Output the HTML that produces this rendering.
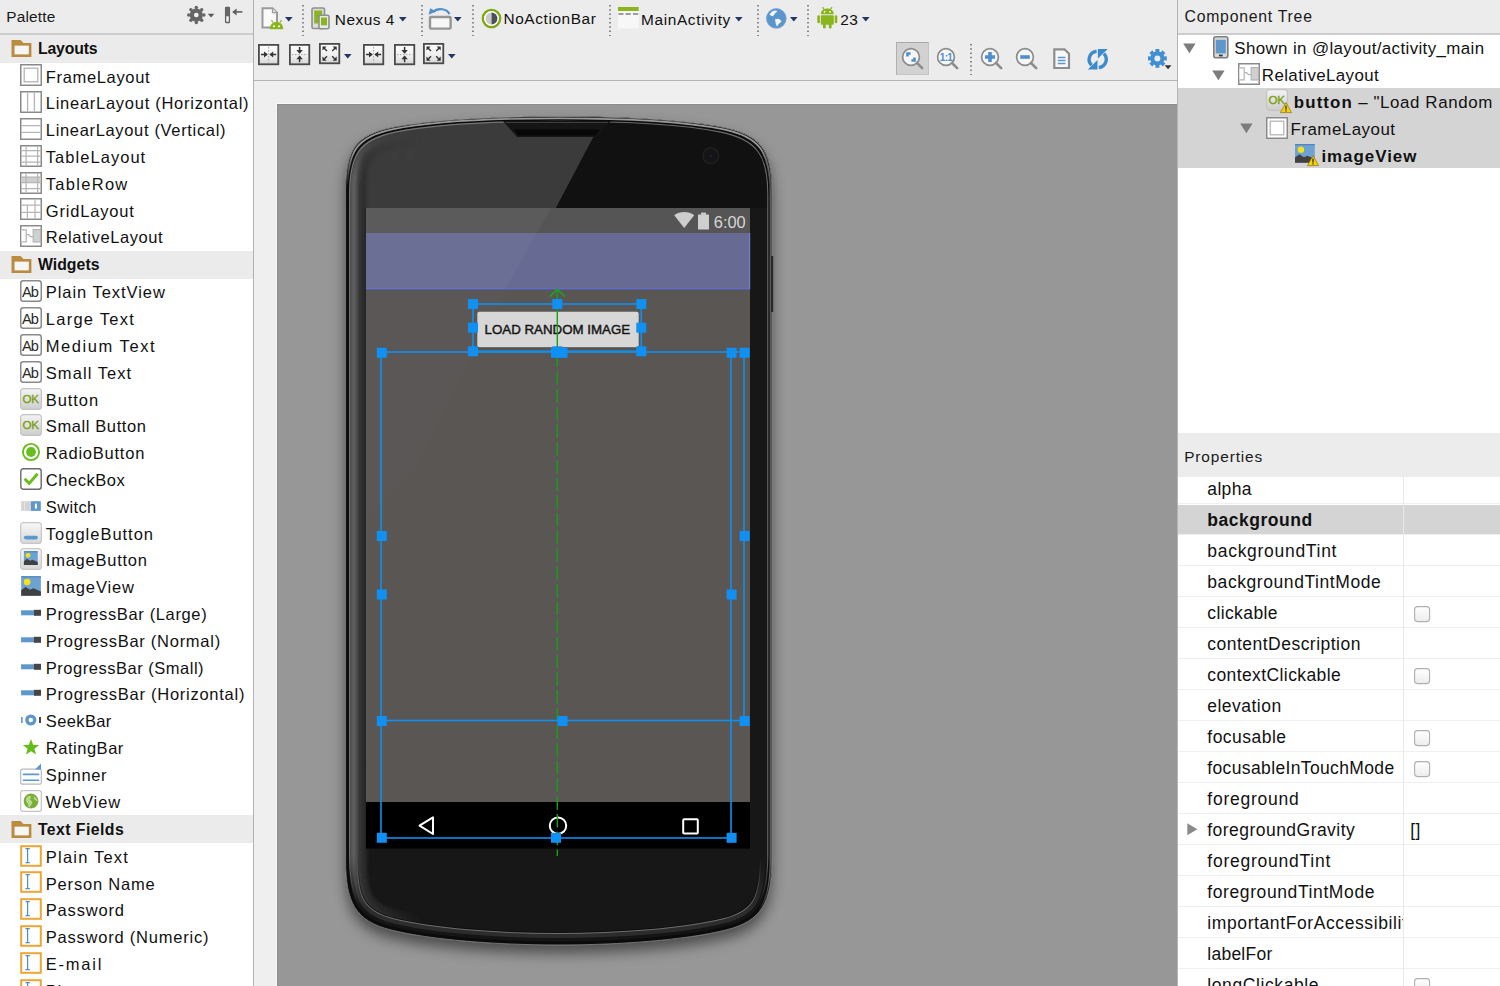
<!DOCTYPE html><html><head><meta charset="utf-8"><style>
html,body{margin:0;padding:0;width:1500px;height:986px;overflow:hidden;background:#ececec;font-family:"Liberation Sans",sans-serif;}
.t{position:absolute;height:20px;line-height:20px;white-space:nowrap;}
.i{position:absolute;overflow:visible;}
.r{position:absolute;}
</style></head><body>
<div class="r" style="left:0px;top:0px;width:253px;height:33px;background:#ececec;"></div>
<div class="r" style="left:0px;top:33px;width:253px;height:2px;background:#cdcdcd;"></div>
<div class="r" style="left:0px;top:35px;width:253px;height:951px;background:#ffffff;"></div>
<div class="r" style="left:253px;top:0px;width:1px;height:986px;background:#b2b2b2;"></div>
<div class="t" style="left:6.20px;top:6.86px;font-size:15.4px;font-weight:400;letter-spacing:0.2px;color:#1a1a1a;">Palette</div>
<svg class="i" style="left:186.00px;top:5.00px" width="32" height="22" viewBox="0 0 32 22"><circle cx="10.3" cy="10" r="6.6" fill="#666"/><circle cx="17.90" cy="10.00" r="1.75" fill="#666"/><circle cx="15.67" cy="15.37" r="1.75" fill="#666"/><circle cx="10.30" cy="17.60" r="1.75" fill="#666"/><circle cx="4.93" cy="15.37" r="1.75" fill="#666"/><circle cx="2.70" cy="10.00" r="1.75" fill="#666"/><circle cx="4.93" cy="4.63" r="1.75" fill="#666"/><circle cx="10.30" cy="2.40" r="1.75" fill="#666"/><circle cx="15.67" cy="4.63" r="1.75" fill="#666"/><circle cx="10.3" cy="10" r="2.3" fill="#f4f4f4"/><path d="M21.8 8.8H28.4L25.1 12.6Z" fill="#5a5a5a"/></svg>
<svg class="i" style="left:224.00px;top:6.00px" width="22" height="18" viewBox="0 0 22 18"><rect x="1.6" y="1.3" width="3.8" height="15.2" rx="0.6" fill="#f4f4f4" stroke="#606060" stroke-width="1.3"/><rect x="1.6" y="1.3" width="3.8" height="9" fill="#666"/><path d="M9.2 5.9H18.4" stroke="#606060" stroke-width="1.6"/><path d="M8.2 5.9L12.6 2.4V9.4Z" fill="#606060"/></svg>
<div class="r" style="left:0px;top:34.70px;width:253px;height:28px;background:#ebebeb;"></div>
<svg class="i" style="left:10.50px;top:40.20px" width="21" height="17" viewBox="0 0 21 17"><path d="M0.5 0H9.5L12.5 2.9H20.4V16.9H0.5Z M3.7 5.8V14.2H17.6V5.8Z" fill="#ba8c3e" fill-rule="evenodd"/><rect x="3.7" y="5.8" width="13.9" height="8.4" fill="#f6f6f6"/></svg>
<div class="t" style="left:37.90px;top:39.13px;font-size:15.8px;font-weight:700;letter-spacing:-0.15px;color:#111;">Layouts</div>
<svg class="i" style="left:20.00px;top:64.40px" width="22" height="22" viewBox="0 0 22 22"><rect x="0.75" y="0.75" width="20.5" height="20.5" rx="0" fill="#fff" stroke="#8a8a8a" stroke-width="1.5"/><rect x="4.2" y="4.2" width="13.6" height="13.6" fill="none" stroke="#b4b4b4" stroke-width="1.3"/></svg>
<div class="t" style="left:45.80px;top:66.58px;font-size:16.5px;font-weight:400;letter-spacing:0.66px;color:#111;">FrameLayout</div>
<svg class="i" style="left:20.00px;top:91.20px" width="22" height="22" viewBox="0 0 22 22"><rect x="0.75" y="0.75" width="20.5" height="20.5" rx="0" fill="#fff" stroke="#8a8a8a" stroke-width="1.5"/><path d="M7.6 1.5V20.5M14.4 1.5V20.5" stroke="#b4b4b4" stroke-width="1.3"/></svg>
<div class="t" style="left:45.80px;top:93.38px;font-size:16.5px;font-weight:400;letter-spacing:0.728px;color:#111;">LinearLayout (Horizontal)</div>
<svg class="i" style="left:20.00px;top:118.00px" width="22" height="22" viewBox="0 0 22 22"><rect x="0.75" y="0.75" width="20.5" height="20.5" rx="0" fill="#fff" stroke="#8a8a8a" stroke-width="1.5"/><path d="M1.5 7.6H20.5M1.5 14.4H20.5" stroke="#b4b4b4" stroke-width="1.3"/></svg>
<div class="t" style="left:45.80px;top:120.18px;font-size:16.5px;font-weight:400;letter-spacing:0.665px;color:#111;">LinearLayout (Vertical)</div>
<svg class="i" style="left:20.00px;top:144.80px" width="22" height="22" viewBox="0 0 22 22"><rect x="0.75" y="0.75" width="20.5" height="20.5" rx="0" fill="#fff" stroke="#8a8a8a" stroke-width="1.5"/><path d="M6.1 1.5V20.5M17.6 1.5V20.5M1.5 5.6H20.5M1.5 11.1H20.5M1.5 17.1H20.5" stroke="#b4b4b4" stroke-width="1.2"/></svg>
<div class="t" style="left:45.80px;top:146.98px;font-size:16.5px;font-weight:400;letter-spacing:1.04px;color:#111;">TableLayout</div>
<svg class="i" style="left:20.00px;top:171.60px" width="22" height="22" viewBox="0 0 22 22"><rect x="0.75" y="0.75" width="20.5" height="20.5" rx="0" fill="#fff" stroke="#8a8a8a" stroke-width="1.5"/><rect x="1.5" y="5.2" width="19" height="5.4" fill="#cfcfcf"/><path d="M6.1 1.5V20.5M17.6 1.5V20.5M1.5 5.2H20.5M1.5 10.6H20.5M1.5 16.6H20.5" stroke="#b4b4b4" stroke-width="1.2"/></svg>
<div class="t" style="left:45.80px;top:173.78px;font-size:16.5px;font-weight:400;letter-spacing:1.291px;color:#111;">TableRow</div>
<svg class="i" style="left:20.00px;top:198.40px" width="22" height="22" viewBox="0 0 22 22"><rect x="0.75" y="0.75" width="20.5" height="20.5" rx="0" fill="#fff" stroke="#8a8a8a" stroke-width="1.5"/><path d="M15 1.5V20.5M1.5 7.2H20.5M1.5 14.4H20.5M7.4 7.2V20.5" stroke="#b4b4b4" stroke-width="1.2"/></svg>
<div class="t" style="left:45.80px;top:200.58px;font-size:16.5px;font-weight:400;letter-spacing:0.809px;color:#111;">GridLayout</div>
<svg class="i" style="left:20.00px;top:225.20px" width="22" height="22" viewBox="0 0 22 22"><rect x="0.75" y="0.75" width="20.5" height="20.5" rx="0" fill="#fff" stroke="#8a8a8a" stroke-width="1.5"/><path d="M1.5 4.8H6.2V16.8H1.5" fill="#fff" stroke="#b4b4b4" stroke-width="1.2"/><rect x="13.2" y="4.6" width="7.3" height="12.4" fill="#d0d0d0" stroke="#b4b4b4" stroke-width="1.2"/><path d="M6.2 9.6H8.6L10.4 11.6H13.2" fill="none" stroke="#b4b4b4" stroke-width="1.2"/></svg>
<div class="t" style="left:45.80px;top:227.38px;font-size:16.5px;font-weight:400;letter-spacing:0.597px;color:#111;">RelativeLayout</div>
<div class="r" style="left:0px;top:250.85px;width:253px;height:28px;background:#ebebeb;"></div>
<svg class="i" style="left:10.50px;top:256.35px" width="21" height="17" viewBox="0 0 21 17"><path d="M0.5 0H9.5L12.5 2.9H20.4V16.9H0.5Z M3.7 5.8V14.2H17.6V5.8Z" fill="#ba8c3e" fill-rule="evenodd"/><rect x="3.7" y="5.8" width="13.9" height="8.4" fill="#f6f6f6"/></svg>
<div class="t" style="left:37.90px;top:255.28px;font-size:15.8px;font-weight:700;letter-spacing:0.05px;color:#111;">Widgets</div>
<svg class="i" style="left:20.00px;top:280.30px" width="22" height="22" viewBox="0 0 22 22"><rect x="0.75" y="0.75" width="20.5" height="20.5" rx="2.5" fill="#fff" stroke="#8a8a8a" stroke-width="1.5"/><text x="1.9" y="16.6" font-family="Liberation Sans" font-size="14.6" fill="#2a2a2a" letter-spacing="-0.9">Ab</text></svg>
<div class="t" style="left:45.80px;top:282.48px;font-size:16.5px;font-weight:400;letter-spacing:0.951px;color:#111;">Plain TextView</div>
<svg class="i" style="left:20.00px;top:307.10px" width="22" height="22" viewBox="0 0 22 22"><rect x="0.75" y="0.75" width="20.5" height="20.5" rx="2.5" fill="#fff" stroke="#8a8a8a" stroke-width="1.5"/><text x="1.9" y="16.6" font-family="Liberation Sans" font-size="14.6" fill="#2a2a2a" letter-spacing="-0.9">Ab</text></svg>
<div class="t" style="left:45.80px;top:309.28px;font-size:16.5px;font-weight:400;letter-spacing:1.253px;color:#111;">Large Text</div>
<svg class="i" style="left:20.00px;top:333.90px" width="22" height="22" viewBox="0 0 22 22"><rect x="0.75" y="0.75" width="20.5" height="20.5" rx="2.5" fill="#fff" stroke="#8a8a8a" stroke-width="1.5"/><text x="1.9" y="16.6" font-family="Liberation Sans" font-size="14.6" fill="#2a2a2a" letter-spacing="-0.9">Ab</text></svg>
<div class="t" style="left:45.80px;top:336.08px;font-size:16.5px;font-weight:400;letter-spacing:1.55px;color:#111;">Medium Text</div>
<svg class="i" style="left:20.00px;top:360.70px" width="22" height="22" viewBox="0 0 22 22"><rect x="0.75" y="0.75" width="20.5" height="20.5" rx="2.5" fill="#fff" stroke="#8a8a8a" stroke-width="1.5"/><text x="1.9" y="16.6" font-family="Liberation Sans" font-size="14.6" fill="#2a2a2a" letter-spacing="-0.9">Ab</text></svg>
<div class="t" style="left:45.80px;top:362.88px;font-size:16.5px;font-weight:400;letter-spacing:1.064px;color:#111;">Small Text</div>
<svg class="i" style="left:20.00px;top:387.50px" width="22" height="22" viewBox="0 0 22 22"><defs><linearGradient id="okg" x1="0" y1="0" x2="0" y2="1"><stop offset="0" stop-color="#f4f4f4"/><stop offset="1" stop-color="#cdcdcd"/></linearGradient></defs><rect x="0.6" y="0.6" width="20.8" height="20.8" rx="3" fill="url(#okg)" stroke="#c4c4c4" stroke-width="1.2"/><text x="2.6" y="15.4" font-family="Liberation Sans" font-size="11.6" fill="#7a9e12" stroke="#7a9e12" stroke-width="0.35" letter-spacing="-0.3">OK</text></svg>
<div class="t" style="left:45.80px;top:389.68px;font-size:16.5px;font-weight:400;letter-spacing:0.92px;color:#111;">Button</div>
<svg class="i" style="left:20.00px;top:414.30px" width="22" height="22" viewBox="0 0 22 22"><defs><linearGradient id="okg" x1="0" y1="0" x2="0" y2="1"><stop offset="0" stop-color="#f4f4f4"/><stop offset="1" stop-color="#cdcdcd"/></linearGradient></defs><rect x="0.6" y="0.6" width="20.8" height="20.8" rx="3" fill="url(#okg)" stroke="#c4c4c4" stroke-width="1.2"/><text x="2.6" y="15.4" font-family="Liberation Sans" font-size="11.6" fill="#7a9e12" stroke="#7a9e12" stroke-width="0.35" letter-spacing="-0.3">OK</text></svg>
<div class="t" style="left:45.80px;top:416.48px;font-size:16.5px;font-weight:400;letter-spacing:0.602px;color:#111;">Small Button</div>
<svg class="i" style="left:20.00px;top:441.10px" width="22" height="22" viewBox="0 0 22 22"><circle cx="11" cy="11" r="8.1" fill="#fff" stroke="#69bd1f" stroke-width="1.9"/><circle cx="11" cy="11" r="4.9" fill="#69bd1f"/></svg>
<div class="t" style="left:45.80px;top:443.28px;font-size:16.5px;font-weight:400;letter-spacing:0.77px;color:#111;">RadioButton</div>
<svg class="i" style="left:20.00px;top:467.90px" width="22" height="22" viewBox="0 0 22 22"><rect x="0.8" y="0.8" width="20.4" height="20.4" rx="2.5" fill="#fff" stroke="#6a6a6a" stroke-width="1.4"/><path d="M4.6 10.8L9.2 15.4L17.6 5.8" fill="none" stroke="#69bd1f" stroke-width="3"/></svg>
<div class="t" style="left:45.80px;top:470.08px;font-size:16.5px;font-weight:400;letter-spacing:0.549px;color:#111;">CheckBox</div>
<svg class="i" style="left:20.00px;top:494.70px" width="22" height="22" viewBox="0 0 22 22"><rect x="1.2" y="6.2" width="10" height="9.7" fill="#d3d3d3"/><rect x="4" y="6.2" width="1" height="9.7" fill="#e6e6e6"/><rect x="11" y="6.2" width="9.8" height="9.7" fill="#5e97cc"/><rect x="14.9" y="8.6" width="2" height="5" fill="#fff"/></svg>
<div class="t" style="left:45.80px;top:496.88px;font-size:16.5px;font-weight:400;letter-spacing:0.38px;color:#111;">Switch</div>
<svg class="i" style="left:20.00px;top:521.50px" width="22" height="22" viewBox="0 0 22 22"><defs><linearGradient id="tgg" x1="0" y1="0" x2="0" y2="1"><stop offset="0" stop-color="#f7f7f7"/><stop offset="1" stop-color="#d7d7d7"/></linearGradient></defs><rect x="0.6" y="0.6" width="20.8" height="20.8" rx="3" fill="url(#tgg)" stroke="#c8c8c8" stroke-width="1.2"/><rect x="3.9" y="13.8" width="14" height="3.6" rx="1.8" fill="#5e97cc"/></svg>
<div class="t" style="left:45.80px;top:523.68px;font-size:16.5px;font-weight:400;letter-spacing:0.993px;color:#111;">ToggleButton</div>
<svg class="i" style="left:20.00px;top:548.30px" width="22" height="22" viewBox="0 0 22 22"><defs><linearGradient id="tgg" x1="0" y1="0" x2="0" y2="1"><stop offset="0" stop-color="#f7f7f7"/><stop offset="1" stop-color="#d7d7d7"/></linearGradient></defs><rect x="0.6" y="0.6" width="20.8" height="20.8" rx="3" fill="url(#tgg)" stroke="#c8c8c8" stroke-width="1.2"/><rect x="3.9" y="3.2" width="13.8" height="13.8" fill="#6ea2d3"/><rect x="3.9" y="3.2" width="13.8" height="1.2" fill="#4f86bd"/><circle cx="8.04" cy="7.34" r="2.35" fill="#f7e11a"/><path d="M3.9 13.14L6.94 10.79L10.11 12.86L12.46 11.76L17.7 13.96V17.0H3.9Z" fill="#414141"/></svg>
<div class="t" style="left:45.80px;top:550.48px;font-size:16.5px;font-weight:400;letter-spacing:0.76px;color:#111;">ImageButton</div>
<svg class="i" style="left:20.00px;top:575.10px" width="22" height="22" viewBox="0 0 22 22"><rect x="1.2" y="1.2" width="19.7" height="19.5" fill="#6ea2d3"/><rect x="1.2" y="1.2" width="19.7" height="1.2" fill="#4f86bd"/><circle cx="7.11" cy="7.05" r="3.32" fill="#f7e11a"/><path d="M1.2 15.24L5.53 11.93L10.06 14.85L13.41 13.29L20.9 16.41V20.7H1.2Z" fill="#414141"/></svg>
<div class="t" style="left:45.80px;top:577.28px;font-size:16.5px;font-weight:400;letter-spacing:0.845px;color:#111;">ImageView</div>
<svg class="i" style="left:20.00px;top:601.90px" width="22" height="22" viewBox="0 0 22 22"><rect x="1.1" y="8.3" width="13" height="5" fill="#5e97cc"/><rect x="14" y="7.8" width="7" height="6" fill="#454545"/></svg>
<div class="t" style="left:45.80px;top:604.08px;font-size:16.5px;font-weight:400;letter-spacing:0.631px;color:#111;">ProgressBar (Large)</div>
<svg class="i" style="left:20.00px;top:628.70px" width="22" height="22" viewBox="0 0 22 22"><rect x="1.1" y="8.3" width="13" height="5" fill="#5e97cc"/><rect x="14" y="7.8" width="7" height="6" fill="#454545"/></svg>
<div class="t" style="left:45.80px;top:630.88px;font-size:16.5px;font-weight:400;letter-spacing:0.731px;color:#111;">ProgressBar (Normal)</div>
<svg class="i" style="left:20.00px;top:655.50px" width="22" height="22" viewBox="0 0 22 22"><rect x="1.1" y="8.3" width="13" height="5" fill="#5e97cc"/><rect x="14" y="7.8" width="7" height="6" fill="#454545"/></svg>
<div class="t" style="left:45.80px;top:657.68px;font-size:16.5px;font-weight:400;letter-spacing:0.514px;color:#111;">ProgressBar (Small)</div>
<svg class="i" style="left:20.00px;top:682.30px" width="22" height="22" viewBox="0 0 22 22"><rect x="1.1" y="8.3" width="13" height="5" fill="#5e97cc"/><rect x="14" y="7.8" width="7" height="6" fill="#454545"/></svg>
<div class="t" style="left:45.80px;top:684.48px;font-size:16.5px;font-weight:400;letter-spacing:0.742px;color:#111;">ProgressBar (Horizontal)</div>
<svg class="i" style="left:20.00px;top:709.10px" width="22" height="22" viewBox="0 0 22 22"><rect x="1.1" y="8" width="1.6" height="6" fill="#5e97cc"/><circle cx="10.8" cy="11" r="5.6" fill="#5e97cc"/><circle cx="10.8" cy="11" r="2.2" fill="#fff"/><rect x="19" y="8" width="2" height="6" fill="#454545"/></svg>
<div class="t" style="left:45.80px;top:711.28px;font-size:16.5px;font-weight:400;letter-spacing:0.37px;color:#111;">SeekBar</div>
<svg class="i" style="left:20.00px;top:735.90px" width="22" height="22" viewBox="0 0 22 22"><polygon points="11.00,3.00 13.12,8.69 19.18,8.94 14.42,12.71 16.05,18.56 11.00,15.20 5.95,18.56 7.58,12.71 2.82,8.94 8.88,8.69" fill="#66bb1a"/></svg>
<div class="t" style="left:45.80px;top:738.08px;font-size:16.5px;font-weight:400;letter-spacing:0.52px;color:#111;">RatingBar</div>
<svg class="i" style="left:20.00px;top:762.70px" width="22" height="22" viewBox="0 0 22 22"><rect x="0.7" y="6.2" width="20.6" height="15" rx="1.5" fill="#fff" stroke="#b8b8b8" stroke-width="1.2"/><path d="M2.8 11.4H19.2M2.8 17.2H19.2" stroke="#5e97cc" stroke-width="1.6"/><path d="M21 0.4V6.4H15Z" fill="#5e97cc"/></svg>
<div class="t" style="left:45.80px;top:764.88px;font-size:16.5px;font-weight:400;letter-spacing:0.653px;color:#111;">Spinner</div>
<svg class="i" style="left:20.00px;top:789.50px" width="22" height="22" viewBox="0 0 22 22"><rect x="0.7" y="0.7" width="20.6" height="20.6" rx="2" fill="#fff" stroke="#c4c4c4" stroke-width="1.2"/><circle cx="11" cy="11" r="7.4" fill="#7aae3a"/><path d="M6.5 7.5C8 6 10 5.5 11.5 6.5C11 8 9.5 8.5 10.5 10C12 11 13 12.5 11.5 14.5C10.5 16 9.5 17 9 18C8 16 8.5 14 7.5 13C6 12 5.5 10 6.5 7.5Z M14 6.5C15.5 7.5 17 9 17.5 11C16.5 11.5 15.5 10.5 14.5 9.5C13.5 8.5 13.5 7.5 14 6.5Z" fill="#b8d98e"/></svg>
<div class="t" style="left:45.80px;top:791.68px;font-size:16.5px;font-weight:400;letter-spacing:0.87px;color:#111;">WebView</div>
<div class="r" style="left:0px;top:815.10px;width:253px;height:28px;background:#ebebeb;"></div>
<svg class="i" style="left:10.50px;top:820.60px" width="21" height="17" viewBox="0 0 21 17"><path d="M0.5 0H9.5L12.5 2.9H20.4V16.9H0.5Z M3.7 5.8V14.2H17.6V5.8Z" fill="#ba8c3e" fill-rule="evenodd"/><rect x="3.7" y="5.8" width="13.9" height="8.4" fill="#f6f6f6"/></svg>
<div class="t" style="left:37.90px;top:819.53px;font-size:15.8px;font-weight:700;letter-spacing:0.45px;color:#111;">Text Fields</div>
<svg class="i" style="left:20.00px;top:844.60px" width="22" height="22" viewBox="0 0 22 22"><rect x="1.2" y="1.2" width="19.6" height="19.6" fill="#fff" stroke="#efa534" stroke-width="2"/><path d="M5.5 3.6H9.8M7.6 3.6V17.6M5.5 17.6H9.8" fill="none" stroke="#4c8fd0" stroke-width="1.2"/></svg>
<div class="t" style="left:45.80px;top:846.78px;font-size:16.5px;font-weight:400;letter-spacing:1.209px;color:#111;">Plain Text</div>
<svg class="i" style="left:20.00px;top:871.45px" width="22" height="22" viewBox="0 0 22 22"><rect x="1.2" y="1.2" width="19.6" height="19.6" fill="#fff" stroke="#efa534" stroke-width="2"/><path d="M5.5 3.6H9.8M7.6 3.6V17.6M5.5 17.6H9.8" fill="none" stroke="#4c8fd0" stroke-width="1.2"/></svg>
<div class="t" style="left:45.80px;top:873.63px;font-size:16.5px;font-weight:400;letter-spacing:0.81px;color:#111;">Person Name</div>
<svg class="i" style="left:20.00px;top:898.30px" width="22" height="22" viewBox="0 0 22 22"><rect x="1.2" y="1.2" width="19.6" height="19.6" fill="#fff" stroke="#efa534" stroke-width="2"/><path d="M5.5 3.6H9.8M7.6 3.6V17.6M5.5 17.6H9.8" fill="none" stroke="#4c8fd0" stroke-width="1.2"/></svg>
<div class="t" style="left:45.80px;top:900.48px;font-size:16.5px;font-weight:400;letter-spacing:0.82px;color:#111;">Password</div>
<svg class="i" style="left:20.00px;top:925.15px" width="22" height="22" viewBox="0 0 22 22"><rect x="1.2" y="1.2" width="19.6" height="19.6" fill="#fff" stroke="#efa534" stroke-width="2"/><path d="M5.5 3.6H9.8M7.6 3.6V17.6M5.5 17.6H9.8" fill="none" stroke="#4c8fd0" stroke-width="1.2"/></svg>
<div class="t" style="left:45.80px;top:927.33px;font-size:16.5px;font-weight:400;letter-spacing:0.779px;color:#111;">Password (Numeric)</div>
<svg class="i" style="left:20.00px;top:952.00px" width="22" height="22" viewBox="0 0 22 22"><rect x="1.2" y="1.2" width="19.6" height="19.6" fill="#fff" stroke="#efa534" stroke-width="2"/><path d="M5.5 3.6H9.8M7.6 3.6V17.6M5.5 17.6H9.8" fill="none" stroke="#4c8fd0" stroke-width="1.2"/></svg>
<div class="t" style="left:45.80px;top:954.18px;font-size:16.5px;font-weight:400;letter-spacing:1.76px;color:#111;">E-mail</div>
<svg class="i" style="left:20.00px;top:978.85px" width="22" height="22" viewBox="0 0 22 22"><rect x="1.2" y="1.2" width="19.6" height="19.6" fill="#fff" stroke="#efa534" stroke-width="2"/><path d="M5.5 3.6H9.8M7.6 3.6V17.6M5.5 17.6H9.8" fill="none" stroke="#4c8fd0" stroke-width="1.2"/></svg>
<div class="t" style="left:45.80px;top:981.03px;font-size:16.5px;font-weight:400;letter-spacing:0.72px;color:#111;">Phone</div>
<div class="r" style="left:254px;top:0px;width:923px;height:80px;background:#ececec;"></div>
<div class="r" style="left:254px;top:80px;width:923px;height:1px;background:#b4b4b4;"></div>
<div class="r" style="left:254px;top:81px;width:923px;height:23px;background:#efefef;"></div>
<div class="r" style="left:254px;top:104px;width:23px;height:882px;background:#efefef;"></div>
<svg class="i" style="left:302.40px;top:4.50px" width="2" height="31.0" viewBox="0 0 2 31.0"><line x1="1" y1="0" x2="1" y2="31.0" stroke="#5e5e5e" stroke-width="1.4" stroke-dasharray="1.4 2.87"/></svg>
<svg class="i" style="left:420.90px;top:4.50px" width="2" height="31.0" viewBox="0 0 2 31.0"><line x1="1" y1="0" x2="1" y2="31.0" stroke="#5e5e5e" stroke-width="1.4" stroke-dasharray="1.4 2.87"/></svg>
<svg class="i" style="left:471.90px;top:4.50px" width="2" height="31.0" viewBox="0 0 2 31.0"><line x1="1" y1="0" x2="1" y2="31.0" stroke="#5e5e5e" stroke-width="1.4" stroke-dasharray="1.4 2.87"/></svg>
<svg class="i" style="left:608.60px;top:4.50px" width="2" height="31.0" viewBox="0 0 2 31.0"><line x1="1" y1="0" x2="1" y2="31.0" stroke="#5e5e5e" stroke-width="1.4" stroke-dasharray="1.4 2.87"/></svg>
<svg class="i" style="left:756.60px;top:4.50px" width="2" height="31.0" viewBox="0 0 2 31.0"><line x1="1" y1="0" x2="1" y2="31.0" stroke="#5e5e5e" stroke-width="1.4" stroke-dasharray="1.4 2.87"/></svg>
<svg class="i" style="left:807.30px;top:4.50px" width="2" height="31.0" viewBox="0 0 2 31.0"><line x1="1" y1="0" x2="1" y2="31.0" stroke="#5e5e5e" stroke-width="1.4" stroke-dasharray="1.4 2.87"/></svg>
<svg class="i" style="left:969.60px;top:44.00px" width="2" height="31" viewBox="0 0 2 31"><line x1="1" y1="0" x2="1" y2="31" stroke="#5e5e5e" stroke-width="1.4" stroke-dasharray="1.4 2.87"/></svg>
<svg class="i" style="left:260.50px;top:6.50px" width="24" height="24" viewBox="0 0 24 24"><path d="M1.5 1.2H11.5L16 5.7V20.5H1.5Z" fill="#fafafa" stroke="#9a9a9a" stroke-width="2"/><path d="M11.5 1.2V5.7H16" fill="#e0e0e0" stroke="#9a9a9a" stroke-width="1.2"/><path d="M8.8 22.2C8.8 17.6 12 14.8 15.5 14.8C19 14.8 22.2 17.6 22.2 22.2Z" fill="#8ab51e"/><path d="M10.5 13.2L12 15.5M20.5 13.2L19 15.5" stroke="#8ab51e" stroke-width="1.2"/><circle cx="13" cy="19.2" r="1" fill="#fff"/><circle cx="18" cy="19.2" r="1" fill="#fff"/></svg>
<svg class="i" style="left:285.00px;top:17.40px" width="8" height="5" viewBox="0 0 8 5"><path d="M0 0H7.6L3.8 4.6Z" fill="#1f3866"/></svg>
<svg class="i" style="left:310.50px;top:6.50px" width="20" height="23" viewBox="0 0 20 23"><rect x="1" y="1" width="12.5" height="20.5" rx="1.5" fill="#dcdcdc" stroke="#8f8f8f" stroke-width="1.6"/><rect x="3.2" y="3.5" width="8" height="13" fill="#8ab51e"/><rect x="8" y="8.2" width="10" height="13.6" rx="1.5" fill="#e8e8e8" stroke="#8f8f8f" stroke-width="1.6"/><rect x="10" y="10.5" width="6" height="7.8" fill="#8ab51e"/></svg>
<div class="t" style="left:334.80px;top:9.56px;font-size:15.4px;font-weight:400;letter-spacing:0.5px;color:#111;">Nexus 4</div>
<svg class="i" style="left:399.00px;top:17.40px" width="8" height="5" viewBox="0 0 8 5"><path d="M0 0H7.6L3.8 4.6Z" fill="#1f3866"/></svg>
<svg class="i" style="left:428.00px;top:5.50px" width="25" height="25" viewBox="0 0 25 25"><rect x="2" y="11" width="20.6" height="11.6" rx="1" fill="#f6f6f6" stroke="#959595" stroke-width="2.4"/><path d="M21.4 8.2C19.4 2.8 10 1.2 5 6" fill="none" stroke="#4f8fcf" stroke-width="2.2"/><path d="M0.6 8.8L2.2 2.2L8 5.6Z" fill="#4f8fcf"/></svg>
<svg class="i" style="left:454.00px;top:17.40px" width="8" height="5" viewBox="0 0 8 5"><path d="M0 0H7.6L3.8 4.6Z" fill="#1f3866"/></svg>
<svg class="i" style="left:480.50px;top:7.50px" width="21" height="21" viewBox="0 0 21 21"><circle cx="10.5" cy="10.5" r="8.7" fill="#fff" stroke="#7fa614" stroke-width="2.3"/><path d="M10.5 4.6A5.9 5.9 0 0 0 10.5 16.4Z" fill="#c9c9c9"/><path d="M10.5 4.6A5.9 5.9 0 0 1 10.5 16.4Z" fill="#4a4f59"/></svg>
<div class="t" style="left:503.50px;top:9.26px;font-size:15.4px;font-weight:400;letter-spacing:0.6px;color:#111;">NoActionBar</div>
<svg class="i" style="left:617.50px;top:6.50px" width="21" height="22" viewBox="0 0 21 22"><rect x="0" y="0" width="20.7" height="21.4" fill="#f7f7f7"/><rect x="0" y="0" width="20.7" height="4" fill="#8ab51e"/><path d="M0.5 7H5.5M7.6 7H12.8M15 7H20.2" stroke="#9c9c9c" stroke-width="2.2"/></svg>
<div class="t" style="left:641.00px;top:9.96px;font-size:15.4px;font-weight:400;letter-spacing:0.65px;color:#111;">MainActivity</div>
<svg class="i" style="left:735.00px;top:17.40px" width="8" height="5" viewBox="0 0 8 5"><path d="M0 0H7.6L3.8 4.6Z" fill="#1f3866"/></svg>
<svg class="i" style="left:765.50px;top:7.50px" width="21" height="21" viewBox="0 0 21 21"><circle cx="10.3" cy="10.4" r="9.9" fill="#5b95cc" stroke="#7aaad6" stroke-width="0.8"/><path d="M3.4 6.6L6 3.6L8.7 2.4L11.6 2.9L9.4 5L8.4 6.2L7 8.3L5.2 7.8Z" fill="#f2f6fa"/><path d="M9 11.2L12 10.8L14 11.6L15.6 13.4L13.8 15L12.4 16.6L11 18.6L9.9 16.2L9.4 13.8Z" fill="#f2f6fa"/></svg>
<svg class="i" style="left:790.00px;top:17.40px" width="8" height="5" viewBox="0 0 8 5"><path d="M0 0H7.6L3.8 4.6Z" fill="#1f3866"/></svg>
<svg class="i" style="left:816.50px;top:6.00px" width="21" height="23" viewBox="0 0 21 23"><path d="M5.5 1.2L7.2 3.6M15 1.2L13.3 3.6" stroke="#8ab51e" stroke-width="1.2"/><path d="M3.8 8.2C3.8 4.8 6.8 2.6 10.3 2.6C13.8 2.6 16.8 4.8 16.8 8.2Z" fill="#8ab51e"/><circle cx="7.6" cy="5.8" r="0.9" fill="#fff"/><circle cx="13" cy="5.8" r="0.9" fill="#fff"/><rect x="3.8" y="9.2" width="13" height="9.6" rx="1" fill="#8ab51e"/><rect x="0.3" y="9.2" width="2.6" height="8" rx="1.3" fill="#8ab51e"/><rect x="17.7" y="9.2" width="2.6" height="8" rx="1.3" fill="#8ab51e"/><rect x="6" y="17" width="2.8" height="5.6" rx="1.4" fill="#8ab51e"/><rect x="11.8" y="17" width="2.8" height="5.6" rx="1.4" fill="#8ab51e"/></svg>
<div class="t" style="left:840.30px;top:9.76px;font-size:15.4px;font-weight:400;letter-spacing:0.3px;color:#111;">23</div>
<svg class="i" style="left:862.00px;top:17.40px" width="8" height="5" viewBox="0 0 8 5"><path d="M0 0H7.6L3.8 4.6Z" fill="#1f3866"/></svg>
<svg class="i" style="left:258.10px;top:44.40px" width="21.2" height="21.2" viewBox="0 0 21.2 21.2"><defs><linearGradient id="bg2" x1="0" y1="0" x2="0" y2="1"><stop offset="0" stop-color="#fdfdfd"/><stop offset="0.55" stop-color="#f0f0f0"/><stop offset="1" stop-color="#d6d6d6"/></linearGradient></defs><rect x="0.9" y="0.9" width="19.4" height="19.4" fill="url(#bg2)" stroke="#4a4a4a" stroke-width="1.8"/><path d="M10.6 3V18.5" stroke="#9a9a9a" stroke-width="0.9" stroke-dasharray="1.5 1.5"/><path d="M3 10.6H9M18.2 10.6H12.2" stroke="#333" stroke-width="1.5"/><path d="M9.8 10.6L6 7.6V13.6Z M11.4 10.6L15.2 7.6V13.6Z" fill="#333"/></svg>
<svg class="i" style="left:289.10px;top:44.40px" width="21.2" height="21.2" viewBox="0 0 21.2 21.2"><defs><linearGradient id="bg2" x1="0" y1="0" x2="0" y2="1"><stop offset="0" stop-color="#fdfdfd"/><stop offset="0.55" stop-color="#f0f0f0"/><stop offset="1" stop-color="#d6d6d6"/></linearGradient></defs><rect x="0.9" y="0.9" width="19.4" height="19.4" fill="url(#bg2)" stroke="#4a4a4a" stroke-width="1.8"/><path d="M3 10.6H18.5" stroke="#9a9a9a" stroke-width="0.9" stroke-dasharray="1.5 1.5"/><path d="M10.6 3V9M10.6 18.2V12.2" stroke="#333" stroke-width="1.5"/><path d="M10.6 9.8L7.4 6H13.8Z M10.6 11.4L7.4 15.2H13.8Z" fill="#333"/></svg>
<svg class="i" style="left:318.80px;top:43.00px" width="21.2" height="21.2" viewBox="0 0 21.2 21.2"><defs><linearGradient id="bg2" x1="0" y1="0" x2="0" y2="1"><stop offset="0" stop-color="#fdfdfd"/><stop offset="0.55" stop-color="#f0f0f0"/><stop offset="1" stop-color="#d6d6d6"/></linearGradient></defs><rect x="0.9" y="0.9" width="19.4" height="19.4" fill="url(#bg2)" stroke="#4a4a4a" stroke-width="1.8"/><path d="M4.5 4.5L8 8M16.7 4.5L13.2 8M4.5 16.7L8 13.2M16.7 16.7L13.2 13.2" stroke="#333" stroke-width="1.4"/><path d="M3.5 3.5H7.6L3.5 7.6Z M17.7 3.5H13.6L17.7 7.6Z M3.5 17.7H7.6L3.5 13.6Z M17.7 17.7H13.6L17.7 13.6Z" fill="#333"/></svg>
<svg class="i" style="left:344.20px;top:54.00px" width="8" height="5" viewBox="0 0 8 5"><path d="M0 0H7.6L3.8 4.6Z" fill="#1f3866"/></svg>
<svg class="i" style="left:362.60px;top:44.40px" width="21.2" height="21.2" viewBox="0 0 21.2 21.2"><defs><linearGradient id="bg2" x1="0" y1="0" x2="0" y2="1"><stop offset="0" stop-color="#fdfdfd"/><stop offset="0.55" stop-color="#f0f0f0"/><stop offset="1" stop-color="#d6d6d6"/></linearGradient></defs><rect x="0.9" y="0.9" width="19.4" height="19.4" fill="url(#bg2)" stroke="#4a4a4a" stroke-width="1.8"/><path d="M10.6 3V18.5" stroke="#9a9a9a" stroke-width="0.9" stroke-dasharray="1.5 1.5"/><path d="M3 10.6H9M18.2 10.6H12.2" stroke="#333" stroke-width="1.5"/><path d="M9.8 10.6L6 7.6V13.6Z M11.4 10.6L15.2 7.6V13.6Z" fill="#333"/></svg>
<svg class="i" style="left:393.60px;top:44.40px" width="21.2" height="21.2" viewBox="0 0 21.2 21.2"><defs><linearGradient id="bg2" x1="0" y1="0" x2="0" y2="1"><stop offset="0" stop-color="#fdfdfd"/><stop offset="0.55" stop-color="#f0f0f0"/><stop offset="1" stop-color="#d6d6d6"/></linearGradient></defs><rect x="0.9" y="0.9" width="19.4" height="19.4" fill="url(#bg2)" stroke="#4a4a4a" stroke-width="1.8"/><path d="M3 10.6H18.5" stroke="#9a9a9a" stroke-width="0.9" stroke-dasharray="1.5 1.5"/><path d="M10.6 3V9M10.6 18.2V12.2" stroke="#333" stroke-width="1.5"/><path d="M10.6 9.8L7.4 6H13.8Z M10.6 11.4L7.4 15.2H13.8Z" fill="#333"/></svg>
<svg class="i" style="left:423.30px;top:43.00px" width="21.2" height="21.2" viewBox="0 0 21.2 21.2"><defs><linearGradient id="bg2" x1="0" y1="0" x2="0" y2="1"><stop offset="0" stop-color="#fdfdfd"/><stop offset="0.55" stop-color="#f0f0f0"/><stop offset="1" stop-color="#d6d6d6"/></linearGradient></defs><rect x="0.9" y="0.9" width="19.4" height="19.4" fill="url(#bg2)" stroke="#4a4a4a" stroke-width="1.8"/><path d="M4.5 4.5L8 8M16.7 4.5L13.2 8M4.5 16.7L8 13.2M16.7 16.7L13.2 13.2" stroke="#333" stroke-width="1.4"/><path d="M3.5 3.5H7.6L3.5 7.6Z M17.7 3.5H13.6L17.7 7.6Z M3.5 17.7H7.6L3.5 13.6Z M17.7 17.7H13.6L17.7 13.6Z" fill="#333"/></svg>
<svg class="i" style="left:448.20px;top:54.00px" width="8" height="5" viewBox="0 0 8 5"><path d="M0 0H7.6L3.8 4.6Z" fill="#1f3866"/></svg>
<div class="r" style="left:896px;top:41.7px;width:33px;height:33px;background:#d2d2d2;box-sizing:border-box;border:1px solid #c4c4c4;border-top-color:#a9a9a9;border-left-color:#b0b0b0;"></div>
<svg class="i" style="left:901.00px;top:46.50px" width="23" height="23" viewBox="0 0 23 23"><circle cx="10" cy="10" r="8.4" fill="#f6f6f6" stroke="#8c8c8c" stroke-width="1.7"/><path d="M16 16L21.2 21.2" stroke="#8c8c8c" stroke-width="2.6" stroke-linecap="round"/><path d="M5.2 5.2H9.6V7.8H7.8V9.6H5.2Z M14.8 14.8H10.4V12.2H12.2V10.4H14.8Z" fill="#4f8fcf"/></svg>
<svg class="i" style="left:936.00px;top:46.50px" width="23" height="23" viewBox="0 0 23 23"><circle cx="10" cy="10" r="8.4" fill="#f6f6f6" stroke="#8c8c8c" stroke-width="1.7"/><path d="M16 16L21.2 21.2" stroke="#8c8c8c" stroke-width="2.6" stroke-linecap="round"/><text x="10" y="13.6" text-anchor="middle" font-family="Liberation Sans" font-weight="700" font-size="10" letter-spacing="-0.6" fill="#4f8fcf">1:1</text></svg>
<svg class="i" style="left:980.00px;top:46.50px" width="23" height="23" viewBox="0 0 23 23"><circle cx="10" cy="10" r="8.4" fill="#f6f6f6" stroke="#8c8c8c" stroke-width="1.7"/><path d="M16 16L21.2 21.2" stroke="#8c8c8c" stroke-width="2.6" stroke-linecap="round"/><path d="M10 5V15M5 10H15" stroke="#4f8fcf" stroke-width="3.6"/></svg>
<svg class="i" style="left:1015.00px;top:46.50px" width="23" height="23" viewBox="0 0 23 23"><circle cx="10" cy="10" r="8.4" fill="#f6f6f6" stroke="#8c8c8c" stroke-width="1.7"/><path d="M16 16L21.2 21.2" stroke="#8c8c8c" stroke-width="2.6" stroke-linecap="round"/><path d="M5.2 10H14.8" stroke="#4f8fcf" stroke-width="3.6"/></svg>
<svg class="i" style="left:1053.00px;top:47.50px" width="18" height="22" viewBox="0 0 18 22"><path d="M1.3 1.3H11.5L16 5.8V20H1.3Z" fill="#f7f7f7" stroke="#8e8e8e" stroke-width="2.2"/><path d="M4.8 9.5H12.5M4.8 12.5H12.5M4.8 15.5H12.5" stroke="#5e97cc" stroke-width="1.3"/></svg>
<svg class="i" style="left:1086.00px;top:47.50px" width="23" height="23" viewBox="0 0 23 23"><path d="M10.6 3.2A8.2 8.2 0 0 0 5.6 17.2" fill="none" stroke="#3d8bcc" stroke-width="3.4"/><path d="M1.8 21.6H11.5V12Z" fill="#3d8bcc"/><path d="M12.8 19.6A8.2 8.2 0 0 0 17.8 5.6" fill="none" stroke="#3d8bcc" stroke-width="3.4"/><path d="M11.9 1H21.8L11.9 10.6Z" fill="#3d8bcc"/></svg>
<svg class="i" style="left:1147.00px;top:48.00px" width="26" height="24" viewBox="0 0 26 24"><polygon points="19.78,8.34 19.78,12.46 17.26,12.25 16.55,13.94 18.49,15.58 15.58,18.49 13.94,16.55 12.25,17.26 12.46,19.78 8.34,19.78 8.55,17.26 6.86,16.55 5.22,18.49 2.31,15.58 4.25,13.94 3.54,12.25 1.02,12.46 1.02,8.34 3.54,8.55 4.25,6.86 2.31,5.22 5.22,2.31 6.86,4.25 8.55,3.54 8.34,1.02 12.46,1.02 12.25,3.54 13.94,4.25 15.58,2.31 18.49,5.22 16.55,6.86 17.26,8.55" fill="#3f8fd2"/><circle cx="10.4" cy="10.4" r="3.0" fill="#ececec"/><path d="M17.5 17.2H24.5L21 21.2Z" fill="#333"/></svg>
<div class="r" style="left:1177px;top:0px;width:1px;height:986px;background:#b4b4b4;"></div>
<div class="r" style="left:1178px;top:0px;width:322px;height:33px;background:#ececec;"></div>
<div class="r" style="left:1178px;top:33px;width:322px;height:2px;background:#cdcdcd;"></div>
<div class="r" style="left:1178px;top:35px;width:322px;height:398px;background:#ffffff;"></div>
<div class="r" style="left:1178px;top:88px;width:322px;height:80.3px;background:#d4d4d4;"></div>
<div class="t" style="left:1184.50px;top:6.93px;font-size:15.8px;font-weight:400;letter-spacing:0.75px;color:#1a1a1a;">Component Tree</div>
<svg class="i" style="left:1183.20px;top:42.50px" width="13" height="11" viewBox="0 0 13 11"><path d="M0.2 0.5H12.6L6.4 10.2Z" fill="#7c7c7c"/></svg>
<svg class="i" style="left:1212.50px;top:36.00px" width="16" height="23" viewBox="0 0 16 23"><rect x="0.8" y="0.8" width="14" height="21" rx="2" fill="#d8d8d8" stroke="#7e7e7e" stroke-width="1.6"/><rect x="2.8" y="3.8" width="10" height="13.6" fill="#5e97cc"/><rect x="6" y="18.6" width="3.6" height="1.8" fill="#333"/></svg>
<div class="t" style="left:1234.30px;top:38.94px;font-size:16.9px;font-weight:400;letter-spacing:0.38px;color:#111;">Shown in @layout/activity_main</div>
<svg class="i" style="left:1211.80px;top:69.50px" width="13" height="11" viewBox="0 0 13 11"><path d="M0.2 0.5H12.6L6.4 10.2Z" fill="#7c7c7c"/></svg>
<svg class="i" style="left:1237.50px;top:63.00px" width="22" height="22" viewBox="0 0 22 22"><rect x="0.75" y="0.75" width="20.5" height="20.5" rx="0" fill="#fff" stroke="#8a8a8a" stroke-width="1.5"/><path d="M1.5 4.8H6.2V16.8H1.5" fill="#fff" stroke="#b4b4b4" stroke-width="1.2"/><rect x="13.2" y="4.6" width="7.3" height="12.4" fill="#d0d0d0" stroke="#b4b4b4" stroke-width="1.2"/><path d="M6.2 9.6H8.6L10.4 11.6H13.2" fill="none" stroke="#b4b4b4" stroke-width="1.2"/></svg>
<div class="t" style="left:1261.80px;top:65.94px;font-size:16.9px;font-weight:400;letter-spacing:0.4px;color:#111;">RelativeLayout</div>
<svg class="i" style="left:1266.00px;top:89.00px" width="22" height="22" viewBox="0 0 22 22"><defs><linearGradient id="okg2" x1="0" y1="0" x2="0" y2="1"><stop offset="0" stop-color="#f4f4f4"/><stop offset="1" stop-color="#cdcdcd"/></linearGradient></defs><rect x="0.6" y="0.6" width="20.8" height="20.8" rx="3" fill="url(#okg2)" stroke="#c4c4c4" stroke-width="1.2"/><text x="2.6" y="15.4" font-family="Liberation Sans" font-size="11.6" fill="#7a9e12" stroke="#7a9e12" stroke-width="0.35" letter-spacing="-0.3">OK</text></svg>
<svg class="i" style="left:1279.50px;top:101.50px" width="12" height="11" viewBox="0 0 12 11"><path d="M6 0.6L11.6 10.6H0.4Z" fill="#f6d20e" stroke="#8a7400" stroke-width="0.7"/><rect x="5.4" y="3.6" width="1.2" height="4" fill="#222"/><rect x="5.4" y="8.3" width="1.2" height="1.2" fill="#222"/></svg>
<div class="t" style="left:1293.80px;top:92.74px;font-size:16.9px;font-weight:400;letter-spacing:0.6px;color:#111;"><b style="letter-spacing:1.1px">button</b> &#8211; "Load Random</div>
<svg class="i" style="left:1240.00px;top:123.00px" width="13" height="11" viewBox="0 0 13 11"><path d="M0.2 0.5H12.6L6.4 10.2Z" fill="#7c7c7c"/></svg>
<svg class="i" style="left:1266.00px;top:116.50px" width="22" height="22" viewBox="0 0 22 22"><rect x="0.75" y="0.75" width="20.5" height="20.5" rx="0" fill="#fff" stroke="#8a8a8a" stroke-width="1.5"/><rect x="4.2" y="4.2" width="13.6" height="13.6" fill="none" stroke="#b4b4b4" stroke-width="1.3"/></svg>
<div class="t" style="left:1290.50px;top:119.64px;font-size:16.9px;font-weight:400;letter-spacing:0.5px;color:#111;">FrameLayout</div>
<svg class="i" style="left:1295.20px;top:144.00px" width="20" height="19" viewBox="0 0 20 19"><rect x="0" y="0" width="19.8" height="18.8" fill="#6ea2d3"/><rect x="0" y="0" width="19.8" height="1.2" fill="#4f86bd"/><circle cx="5.94" cy="5.64" r="3.20" fill="#f7e11a"/><path d="M0 13.54L4.36 10.34L8.91 13.16L12.28 11.66L19.8 14.66V18.8H0Z" fill="#414141"/></svg>
<svg class="i" style="left:1307.00px;top:155.00px" width="12" height="11" viewBox="0 0 12 11"><path d="M6 0.6L11.6 10.6H0.4Z" fill="#f6d20e" stroke="#8a7400" stroke-width="0.7"/><rect x="5.4" y="3.6" width="1.2" height="4" fill="#222"/><rect x="5.4" y="8.3" width="1.2" height="1.2" fill="#222"/></svg>
<div class="t" style="left:1321.40px;top:146.64px;font-size:16.9px;font-weight:700;letter-spacing:1.0px;color:#111;">imageView</div>
<div class="r" style="left:1178px;top:433px;width:322px;height:44px;background:#ececec;"></div>
<div class="r" style="left:1178px;top:477px;width:322px;height:509px;background:#ffffff;"></div>
<div class="t" style="left:1184.20px;top:446.86px;font-size:15.4px;font-weight:400;letter-spacing:0.88px;color:#1a1a1a;">Properties</div>
<div class="r" style="left:1178px;top:472px;width:225px;height:31px;overflow:hidden"><div class="t" style="left:29.30px;top:7.44px;font-size:17.5px;font-weight:400;letter-spacing:0.35px;color:#111;">alpha</div></div>
<div class="r" style="left:1178px;top:504.5px;width:225px;height:29.5px;background:#d4d4d4;"></div>
<div class="r" style="left:1404px;top:504.5px;width:96px;height:29.5px;background:#d4d4d4;"></div>
<div class="r" style="left:1178px;top:503px;width:322px;height:1px;background:#efefef;"></div>
<div class="r" style="left:1178px;top:503px;width:225px;height:31px;overflow:hidden"><div class="t" style="left:29.30px;top:7.44px;font-size:17.5px;font-weight:700;letter-spacing:0.522px;color:#111;">background</div></div>
<div class="r" style="left:1178px;top:534px;width:322px;height:1px;background:#efefef;"></div>
<div class="r" style="left:1178px;top:534px;width:225px;height:31px;overflow:hidden"><div class="t" style="left:29.30px;top:7.44px;font-size:17.5px;font-weight:400;letter-spacing:0.708px;color:#111;">backgroundTint</div></div>
<div class="r" style="left:1178px;top:565px;width:322px;height:1px;background:#efefef;"></div>
<div class="r" style="left:1178px;top:565px;width:225px;height:31px;overflow:hidden"><div class="t" style="left:29.30px;top:7.44px;font-size:17.5px;font-weight:400;letter-spacing:0.571px;color:#111;">backgroundTintMode</div></div>
<div class="r" style="left:1178px;top:596px;width:322px;height:1px;background:#efefef;"></div>
<div class="r" style="left:1178px;top:596px;width:225px;height:31px;overflow:hidden"><div class="t" style="left:29.30px;top:7.44px;font-size:17.5px;font-weight:400;letter-spacing:0.387px;color:#111;">clickable</div></div>
<svg class="i" style="left:1414.20px;top:606.00px" width="17" height="17" viewBox="0 0 17 17"><defs><linearGradient id="cbg" x1="0" y1="0" x2="0" y2="1"><stop offset="0" stop-color="#ffffff"/><stop offset="1" stop-color="#ececec"/></linearGradient></defs><rect x="0.6" y="0.6" width="15" height="15" rx="3" fill="url(#cbg)" stroke="#b0b0b0" stroke-width="1.1"/></svg>
<div class="r" style="left:1178px;top:627px;width:322px;height:1px;background:#efefef;"></div>
<div class="r" style="left:1178px;top:627px;width:225px;height:31px;overflow:hidden"><div class="t" style="left:29.30px;top:7.44px;font-size:17.5px;font-weight:400;letter-spacing:0.482px;color:#111;">contentDescription</div></div>
<div class="r" style="left:1178px;top:658px;width:322px;height:1px;background:#efefef;"></div>
<div class="r" style="left:1178px;top:658px;width:225px;height:31px;overflow:hidden"><div class="t" style="left:29.30px;top:7.44px;font-size:17.5px;font-weight:400;letter-spacing:0.4px;color:#111;">contextClickable</div></div>
<svg class="i" style="left:1414.20px;top:668.00px" width="17" height="17" viewBox="0 0 17 17"><defs><linearGradient id="cbg" x1="0" y1="0" x2="0" y2="1"><stop offset="0" stop-color="#ffffff"/><stop offset="1" stop-color="#ececec"/></linearGradient></defs><rect x="0.6" y="0.6" width="15" height="15" rx="3" fill="url(#cbg)" stroke="#b0b0b0" stroke-width="1.1"/></svg>
<div class="r" style="left:1178px;top:689px;width:322px;height:1px;background:#efefef;"></div>
<div class="r" style="left:1178px;top:689px;width:225px;height:31px;overflow:hidden"><div class="t" style="left:29.30px;top:7.44px;font-size:17.5px;font-weight:400;letter-spacing:0.475px;color:#111;">elevation</div></div>
<div class="r" style="left:1178px;top:720px;width:322px;height:1px;background:#efefef;"></div>
<div class="r" style="left:1178px;top:720px;width:225px;height:31px;overflow:hidden"><div class="t" style="left:29.30px;top:7.44px;font-size:17.5px;font-weight:400;letter-spacing:0.475px;color:#111;">focusable</div></div>
<svg class="i" style="left:1414.20px;top:730.00px" width="17" height="17" viewBox="0 0 17 17"><defs><linearGradient id="cbg" x1="0" y1="0" x2="0" y2="1"><stop offset="0" stop-color="#ffffff"/><stop offset="1" stop-color="#ececec"/></linearGradient></defs><rect x="0.6" y="0.6" width="15" height="15" rx="3" fill="url(#cbg)" stroke="#b0b0b0" stroke-width="1.1"/></svg>
<div class="r" style="left:1178px;top:751px;width:322px;height:1px;background:#efefef;"></div>
<div class="r" style="left:1178px;top:751px;width:225px;height:31px;overflow:hidden"><div class="t" style="left:29.30px;top:7.44px;font-size:17.5px;font-weight:400;letter-spacing:0.363px;color:#111;">focusableInTouchMode</div></div>
<svg class="i" style="left:1414.20px;top:761.00px" width="17" height="17" viewBox="0 0 17 17"><defs><linearGradient id="cbg" x1="0" y1="0" x2="0" y2="1"><stop offset="0" stop-color="#ffffff"/><stop offset="1" stop-color="#ececec"/></linearGradient></defs><rect x="0.6" y="0.6" width="15" height="15" rx="3" fill="url(#cbg)" stroke="#b0b0b0" stroke-width="1.1"/></svg>
<div class="r" style="left:1178px;top:782px;width:322px;height:1px;background:#efefef;"></div>
<div class="r" style="left:1178px;top:782px;width:225px;height:31px;overflow:hidden"><div class="t" style="left:29.30px;top:7.44px;font-size:17.5px;font-weight:400;letter-spacing:0.767px;color:#111;">foreground</div></div>
<div class="r" style="left:1178px;top:813px;width:322px;height:1px;background:#efefef;"></div>
<div class="r" style="left:1178px;top:813px;width:225px;height:31px;overflow:hidden"><div class="t" style="left:29.30px;top:7.44px;font-size:17.5px;font-weight:400;letter-spacing:0.462px;color:#111;">foregroundGravity</div></div>
<svg class="i" style="left:1187.00px;top:823.00px" width="11" height="13" viewBox="0 0 11 13"><path d="M0.3 0.3V12.3L10.3 6.3Z" fill="#8a8a8a"/></svg>
<div class="t" style="left:1410.30px;top:820.44px;font-size:17.5px;font-weight:400;letter-spacing:0.4px;color:#111;">[]</div>
<div class="r" style="left:1178px;top:844px;width:322px;height:1px;background:#efefef;"></div>
<div class="r" style="left:1178px;top:844px;width:225px;height:31px;overflow:hidden"><div class="t" style="left:29.30px;top:7.44px;font-size:17.5px;font-weight:400;letter-spacing:0.754px;color:#111;">foregroundTint</div></div>
<div class="r" style="left:1178px;top:875px;width:322px;height:1px;background:#efefef;"></div>
<div class="r" style="left:1178px;top:875px;width:225px;height:31px;overflow:hidden"><div class="t" style="left:29.30px;top:7.44px;font-size:17.5px;font-weight:400;letter-spacing:0.6px;color:#111;">foregroundTintMode</div></div>
<div class="r" style="left:1178px;top:906px;width:322px;height:1px;background:#efefef;"></div>
<div class="r" style="left:1178px;top:906px;width:225px;height:31px;overflow:hidden"><div class="t" style="left:29.30px;top:7.44px;font-size:17.5px;font-weight:400;letter-spacing:0.6px;color:#111;">importantForAccessibility</div></div>
<div class="r" style="left:1178px;top:937px;width:322px;height:1px;background:#efefef;"></div>
<div class="r" style="left:1178px;top:937px;width:225px;height:31px;overflow:hidden"><div class="t" style="left:29.30px;top:7.44px;font-size:17.5px;font-weight:400;letter-spacing:0.243px;color:#111;">labelFor</div></div>
<div class="r" style="left:1178px;top:968px;width:322px;height:1px;background:#efefef;"></div>
<div class="r" style="left:1178px;top:968px;width:225px;height:31px;overflow:hidden"><div class="t" style="left:29.30px;top:7.44px;font-size:17.5px;font-weight:400;letter-spacing:0.6px;color:#111;">longClickable</div></div>
<svg class="i" style="left:1414.20px;top:978.00px" width="17" height="17" viewBox="0 0 17 17"><defs><linearGradient id="cbg" x1="0" y1="0" x2="0" y2="1"><stop offset="0" stop-color="#ffffff"/><stop offset="1" stop-color="#ececec"/></linearGradient></defs><rect x="0.6" y="0.6" width="15" height="15" rx="3" fill="url(#cbg)" stroke="#b0b0b0" stroke-width="1.1"/></svg>
<div class="r" style="left:1403px;top:477px;width:1px;height:509px;background:#e9e9e9;"></div>
<div class="r" style="left:276px;top:103px;width:901px;height:883px;background:#f8f8f8;"></div>
<div class="r" style="left:277px;top:104px;width:900px;height:882px;background:#8c8c8c;"></div>
<div class="r" style="left:278px;top:105px;width:899px;height:881px;background:#979797;"></div>
<svg class="i" style="left:277px;top:104px" width="900" height="882" viewBox="277 104 900 882"><defs><filter id="sh" x="-20%" y="-20%" width="140%" height="140%"><feGaussianBlur stdDeviation="7"/></filter><clipPath id="bodyclip"><path d="M345.6,230 L345.6,190 C345.6,150 356,135 392,127.5 C432,119.5 498,116.5 558.5,116.5 C619,116.5 684,119.5 724,127.5 C760,135 771.8,150 771.8,190 L771.8,860 C771.8,902 762,921 726,930 C686,940 620,945 558.5,945 C497,945 431,940 391,930 C355,921 345.6,902 345.6,860 Z"/></clipPath><clipPath id="scrclip"><rect x="366" y="208" width="384" height="640.5"/></clipPath><linearGradient id="mL" x1="0" y1="0" x2="1" y2="0"><stop offset="0" stop-color="#fff"/><stop offset="0.06" stop-color="#fff"/><stop offset="0.2" stop-color="#000"/><stop offset="1" stop-color="#000"/></linearGradient><mask id="maskL" maskUnits="userSpaceOnUse" x="330" y="100" width="460" height="860"><rect x="330" y="100" width="460" height="860" fill="url(#mL)"/></mask><linearGradient id="mB" x1="0" y1="0" x2="0" y2="1"><stop offset="0" stop-color="#000"/><stop offset="0.88" stop-color="#000"/><stop offset="0.94" stop-color="#fff"/><stop offset="1" stop-color="#fff"/></linearGradient><mask id="maskB" maskUnits="userSpaceOnUse" x="330" y="100" width="460" height="860"><rect x="330" y="100" width="460" height="860" fill="url(#mB)"/></mask><linearGradient id="mNB" x1="0" y1="0" x2="0" y2="1"><stop offset="0" stop-color="#fff"/><stop offset="0.88" stop-color="#fff"/><stop offset="0.94" stop-color="#000"/><stop offset="1" stop-color="#000"/></linearGradient><mask id="maskNB" maskUnits="userSpaceOnUse" x="330" y="100" width="460" height="860"><rect x="330" y="100" width="460" height="860" fill="url(#mNB)"/></mask><linearGradient id="mT" x1="0" y1="0" x2="0" y2="1"><stop offset="0" stop-color="#000"/><stop offset="0.035" stop-color="#000"/><stop offset="0.09" stop-color="#fff"/><stop offset="1" stop-color="#fff"/></linearGradient><mask id="maskT" maskUnits="userSpaceOnUse" x="330" y="100" width="460" height="860"><rect x="330" y="100" width="460" height="860" fill="url(#mT)"/></mask><linearGradient id="mTop" x1="0" y1="0" x2="0" y2="1"><stop offset="0" stop-color="#fff"/><stop offset="0.06" stop-color="#fff"/><stop offset="0.1" stop-color="#000"/><stop offset="1" stop-color="#000"/></linearGradient><mask id="maskTop" maskUnits="userSpaceOnUse" x="330" y="100" width="460" height="860"><rect x="330" y="100" width="460" height="860" fill="url(#mTop)"/></mask><linearGradient id="mR" x1="0" y1="0" x2="1" y2="0"><stop offset="0" stop-color="#000"/><stop offset="0.93" stop-color="#000"/><stop offset="0.96" stop-color="#fff"/><stop offset="1" stop-color="#fff"/></linearGradient><mask id="maskR" maskUnits="userSpaceOnUse" x="330" y="100" width="460" height="860"><rect x="330" y="100" width="460" height="860" fill="url(#mR)"/></mask><filter id="blur1" x="-5%" y="-5%" width="110%" height="110%"><feGaussianBlur stdDeviation="1.6"/></filter></defs><path d="M345.6,230 L345.6,190 C345.6,150 356,135 392,127.5 C432,119.5 498,116.5 558.5,116.5 C619,116.5 684,119.5 724,127.5 C760,135 771.8,150 771.8,190 L771.8,860 C771.8,902 762,921 726,930 C686,940 620,945 558.5,945 C497,945 431,940 391,930 C355,921 345.6,902 345.6,860 Z" transform="translate(0,8)" fill="#000" opacity="0.5" filter="url(#sh)"/><path d="M345.6,230 L345.6,190 C345.6,150 356,135 392,127.5 C432,119.5 498,116.5 558.5,116.5 C619,116.5 684,119.5 724,127.5 C760,135 771.8,150 771.8,190 L771.8,860 C771.8,902 762,921 726,930 C686,940 620,945 558.5,945 C497,945 431,940 391,930 C355,921 345.6,902 345.6,860 Z" fill="#171717"/><g clip-path="url(#bodyclip)"><polygon points="330,100 613,100 556,208 330,208" fill="#3b3b3b"/><polygon points="613,100 790,100 790,208 556,208" fill="#111111"/><g mask="url(#maskT)"><g mask="url(#maskL)"><g filter="url(#blur1)"><path d="M345.6,230 L345.6,190 C345.6,150 356,135 392,127.5 C432,119.5 498,116.5 558.5,116.5 C619,116.5 684,119.5 724,127.5 C760,135 771.8,150 771.8,190 L771.8,860 C771.8,902 762,921 726,930 C686,940 620,945 558.5,945 C497,945 431,940 391,930 C355,921 345.6,902 345.6,860 Z" fill="none" stroke="#2e2e2e" stroke-width="42"/><path d="M345.6,230 L345.6,190 C345.6,150 356,135 392,127.5 C432,119.5 498,116.5 558.5,116.5 C619,116.5 684,119.5 724,127.5 C760,135 771.8,150 771.8,190 L771.8,860 C771.8,902 762,921 726,930 C686,940 620,945 558.5,945 C497,945 431,940 391,930 C355,921 345.6,902 345.6,860 Z" fill="none" stroke="#3a3a3a" stroke-width="30"/><path d="M345.6,230 L345.6,190 C345.6,150 356,135 392,127.5 C432,119.5 498,116.5 558.5,116.5 C619,116.5 684,119.5 724,127.5 C760,135 771.8,150 771.8,190 L771.8,860 C771.8,902 762,921 726,930 C686,940 620,945 558.5,945 C497,945 431,940 391,930 C355,921 345.6,902 345.6,860 Z" fill="none" stroke="#5e5e5e" stroke-width="22"/><path d="M345.6,230 L345.6,190 C345.6,150 356,135 392,127.5 C432,119.5 498,116.5 558.5,116.5 C619,116.5 684,119.5 724,127.5 C760,135 771.8,150 771.8,190 L771.8,860 C771.8,902 762,921 726,930 C686,940 620,945 558.5,945 C497,945 431,940 391,930 C355,921 345.6,902 345.6,860 Z" fill="none" stroke="#2a2a2a" stroke-width="10"/></g></g></g><g mask="url(#maskB)"><path d="M345.6,230 L345.6,190 C345.6,150 356,135 392,127.5 C432,119.5 498,116.5 558.5,116.5 C619,116.5 684,119.5 724,127.5 C760,135 771.8,150 771.8,190 L771.8,860 C771.8,902 762,921 726,930 C686,940 620,945 558.5,945 C497,945 431,940 391,930 C355,921 345.6,902 345.6,860 Z" fill="none" stroke="#0e0e0e" stroke-width="26"/><path d="M345.6,230 L345.6,190 C345.6,150 356,135 392,127.5 C432,119.5 498,116.5 558.5,116.5 C619,116.5 684,119.5 724,127.5 C760,135 771.8,150 771.8,190 L771.8,860 C771.8,902 762,921 726,930 C686,940 620,945 558.5,945 C497,945 431,940 391,930 C355,921 345.6,902 345.6,860 Z" fill="none" stroke="#6e6e6e" stroke-width="24"/><path d="M345.6,230 L345.6,190 C345.6,150 356,135 392,127.5 C432,119.5 498,116.5 558.5,116.5 C619,116.5 684,119.5 724,127.5 C760,135 771.8,150 771.8,190 L771.8,860 C771.8,902 762,921 726,930 C686,940 620,945 558.5,945 C497,945 431,940 391,930 C355,921 345.6,902 345.6,860 Z" fill="none" stroke="#2c2c2c" stroke-width="22"/><path d="M345.6,230 L345.6,190 C345.6,150 356,135 392,127.5 C432,119.5 498,116.5 558.5,116.5 C619,116.5 684,119.5 724,127.5 C760,135 771.8,150 771.8,190 L771.8,860 C771.8,902 762,921 726,930 C686,940 620,945 558.5,945 C497,945 431,940 391,930 C355,921 345.6,902 345.6,860 Z" fill="none" stroke="#151515" stroke-width="14"/></g><path d="M345.6,230 L345.6,190 C345.6,150 356,135 392,127.5 C432,119.5 498,116.5 558.5,116.5 C619,116.5 684,119.5 724,127.5 C760,135 771.8,150 771.8,190 L771.8,860 C771.8,902 762,921 726,930 C686,940 620,945 558.5,945 C497,945 431,940 391,930 C355,921 345.6,902 345.6,860 Z" fill="none" stroke="#0b0b0b" stroke-width="7"/><path d="M345.6,230 L345.6,190 C345.6,150 356,135 392,127.5 C432,119.5 498,116.5 558.5,116.5 C619,116.5 684,119.5 724,127.5 C760,135 771.8,150 771.8,190 L771.8,860 C771.8,902 762,921 726,930 C686,940 620,945 558.5,945 C497,945 431,940 391,930 C355,921 345.6,902 345.6,860 Z" fill="none" stroke="#0b0b0b" stroke-width="9" mask="url(#maskTop)"/><path d="M345.6,230 L345.6,190 C345.6,150 356,135 392,127.5 C432,119.5 498,116.5 558.5,116.5 C619,116.5 684,119.5 724,127.5 C760,135 771.8,150 771.8,190 L771.8,860 C771.8,902 762,921 726,930 C686,940 620,945 558.5,945 C497,945 431,940 391,930 C355,921 345.6,902 345.6,860 Z" fill="none" stroke="#9a9a9a" stroke-width="5.4" mask="url(#maskTop)"/><path d="M345.6,230 L345.6,190 C345.6,150 356,135 392,127.5 C432,119.5 498,116.5 558.5,116.5 C619,116.5 684,119.5 724,127.5 C760,135 771.8,150 771.8,190 L771.8,860 C771.8,902 762,921 726,930 C686,940 620,945 558.5,945 C497,945 431,940 391,930 C355,921 345.6,902 345.6,860 Z" fill="none" stroke="#151515" stroke-width="2" mask="url(#maskTop)"/><g mask="url(#maskR)"><path d="M345.6,230 L345.6,190 C345.6,150 356,135 392,127.5 C432,119.5 498,116.5 558.5,116.5 C619,116.5 684,119.5 724,127.5 C760,135 771.8,150 771.8,190 L771.8,860 C771.8,902 762,921 726,930 C686,940 620,945 558.5,945 C497,945 431,940 391,930 C355,921 345.6,902 345.6,860 Z" fill="none" stroke="#6a6a6a" stroke-width="4.4"/><path d="M345.6,230 L345.6,190 C345.6,150 356,135 392,127.5 C432,119.5 498,116.5 558.5,116.5 C619,116.5 684,119.5 724,127.5 C760,135 771.8,150 771.8,190 L771.8,860 C771.8,902 762,921 726,930 C686,940 620,945 558.5,945 C497,945 431,940 391,930 C355,921 345.6,902 345.6,860 Z" fill="none" stroke="#151515" stroke-width="1.8"/></g><path d="M345.6,230 L345.6,190 C345.6,150 356,135 392,127.5 C432,119.5 498,116.5 558.5,116.5 C619,116.5 684,119.5 724,127.5 C760,135 771.8,150 771.8,190 L771.8,860 C771.8,902 762,921 726,930 C686,940 620,945 558.5,945 C497,945 431,940 391,930 C355,921 345.6,902 345.6,860 Z" fill="none" stroke="#8a8a8a" stroke-width="1.1" opacity="0.75" mask="url(#maskNB)" transform="translate(558.7,530) scale(0.9812,0.9885) translate(-558.7,-530)"/></g><path d="M345.6,230 L345.6,190 C345.6,150 356,135 392,127.5 C432,119.5 498,116.5 558.5,116.5 C619,116.5 684,119.5 724,127.5 C760,135 771.8,150 771.8,190 L771.8,860 C771.8,902 762,921 726,930 C686,940 620,945 558.5,945 C497,945 431,940 391,930 C355,921 345.6,902 345.6,860 Z" fill="none" stroke="#9c9c9c" stroke-width="1" opacity="0.7"/><path d="M503,121 L611,121 L597,137 L517,137 Z" fill="#151515"/><path d="M514,129.5 L600,129.5 L596,135.5 L518,135.5 Z" fill="#080808"/><path d="M506,122.5 L608,122.5" stroke="#5a5a5a" stroke-width="1" opacity="0.6"/><rect x="771" y="256" width="2.2" height="56" fill="#2a2a2a"/><circle cx="710.8" cy="155.8" r="8" fill="#151515" stroke="#202020" stroke-width="1.5"/><circle cx="710.8" cy="155.8" r="1.4" fill="#1a1a50"/><circle cx="395" cy="156" r="4.5" fill="#444" opacity="0.25"/><circle cx="410" cy="156" r="4.5" fill="#444" opacity="0.25"/><rect x="366" y="208" width="384" height="25" fill="#555555"/><rect x="366" y="233" width="384" height="56" fill="#676a92"/><rect x="366" y="288.4" width="384" height="1.4" fill="#6070d6"/><rect x="749" y="233" width="1.2" height="56" fill="#7280cc"/><rect x="366" y="289.8" width="384" height="512.2" fill="#5a5654"/><rect x="366" y="802" width="384" height="46.5" fill="#000"/><g clip-path="url(#scrclip)"><polygon points="330,100 613,100 505,289 330,289" fill="#ffffff" opacity="0.035"/><polygon points="330,289 505,289 420,460 330,560" fill="#ffffff" opacity="0.012"/></g><path d="M674.2,215.2 A17,17 0 0 1 694.2,215.2 L684.2,228 Z" fill="#cdcdcd"/><rect x="698" y="214.5" width="11" height="15" rx="0.6" fill="#cfcfcf"/><rect x="701" y="212.6" width="5" height="2.2" fill="#cfcfcf"/><text x="713.8" y="227.8" font-family="Liberation Sans" font-size="16.4" fill="#d6d6d6">6:00</text><path d="M419.5,825.7 L433,817.4 L433,834 Z" fill="none" stroke="#fff" stroke-width="2" stroke-linejoin="round"/><circle cx="558" cy="825.7" r="8.2" fill="none" stroke="#fff" stroke-width="2"/><rect x="683.2" y="819.2" width="14.6" height="14.2" rx="1" fill="none" stroke="#fff" stroke-width="2"/><rect x="477.3" y="312.5" width="161.4" height="35.8" rx="2" fill="#3f3c3b" opacity="0.5"/><rect x="477.3" y="311.7" width="161.4" height="35.6" rx="2" fill="#d7d7d7"/><text x="484.6" y="333.7" font-family="Liberation Sans" font-size="13.3" fill="#151515" stroke="#151515" stroke-width="0.45" letter-spacing="0">LOAD RANDOM IMAGE</text><path d="M557.3,289 V367" stroke="#17a017" stroke-width="1.4"/><path d="M557.3,371.5 V856" stroke="#17a017" stroke-width="1.4" stroke-dasharray="13.5 4.2"/><path d="M549.6,296.6 L557.3,289.4 L565,296.6" fill="none" stroke="#1fa31f" stroke-width="1.5"/><rect x="473" y="303.2" width="168.29999999999995" height="1.6" fill="#0f90f2"/><rect x="473" y="350.5" width="168.29999999999995" height="1.6" fill="#0f90f2"/><rect x="472.2" y="304" width="1.6" height="47.30000000000001" fill="#0f90f2"/><rect x="640.5" y="304" width="1.6" height="47.30000000000001" fill="#0f90f2"/><rect x="381" y="837.2" width="350" height="1.6" fill="#0f90f2"/><rect x="730.2" y="352" width="1.6" height="486" fill="#0f90f2"/><rect x="381" y="351.2" width="363" height="1.6" fill="#0f90f2"/><rect x="381" y="719.7" width="363" height="1.6" fill="#0f90f2"/><rect x="380.2" y="352" width="1.6" height="486" fill="#0f90f2"/><rect x="743.2" y="352" width="1.6" height="368.5" fill="#0f90f2"/><rect x="468" y="299" width="10" height="10" fill="#0f90f2"/><rect x="552.3" y="299" width="10" height="10" fill="#0f90f2"/><rect x="636.3" y="299" width="10" height="10" fill="#0f90f2"/><rect x="468" y="322.7" width="10" height="10" fill="#0f90f2"/><rect x="636.3" y="322.7" width="10" height="10" fill="#0f90f2"/><rect x="468" y="346.3" width="10" height="10" fill="#0f90f2"/><rect x="552.3" y="346.3" width="10" height="10" fill="#0f90f2"/><rect x="636.3" y="346.3" width="10" height="10" fill="#0f90f2"/><rect x="376.8" y="347.8" width="10" height="10" fill="#0f90f2"/><rect x="551" y="347.8" width="10" height="10" fill="#0f90f2"/><rect x="557.5" y="347.8" width="10" height="10" fill="#0f90f2"/><rect x="726.6" y="347.8" width="10" height="10" fill="#0f90f2"/><rect x="739.6" y="347.8" width="10" height="10" fill="#0f90f2"/><rect x="376.8" y="531" width="10" height="10" fill="#0f90f2"/><rect x="739.6" y="531" width="10" height="10" fill="#0f90f2"/><rect x="376.8" y="589.5" width="10" height="10" fill="#0f90f2"/><rect x="726.6" y="589.5" width="10" height="10" fill="#0f90f2"/><rect x="376.8" y="716" width="10" height="10" fill="#0f90f2"/><rect x="557.5" y="716" width="10" height="10" fill="#0f90f2"/><rect x="739.6" y="716" width="10" height="10" fill="#0f90f2"/><rect x="376.8" y="832.8" width="10" height="10" fill="#0f90f2"/><rect x="551" y="832.8" width="10" height="10" fill="#0f90f2"/><rect x="726.6" y="832.8" width="10" height="10" fill="#0f90f2"/></svg>
</body></html>
